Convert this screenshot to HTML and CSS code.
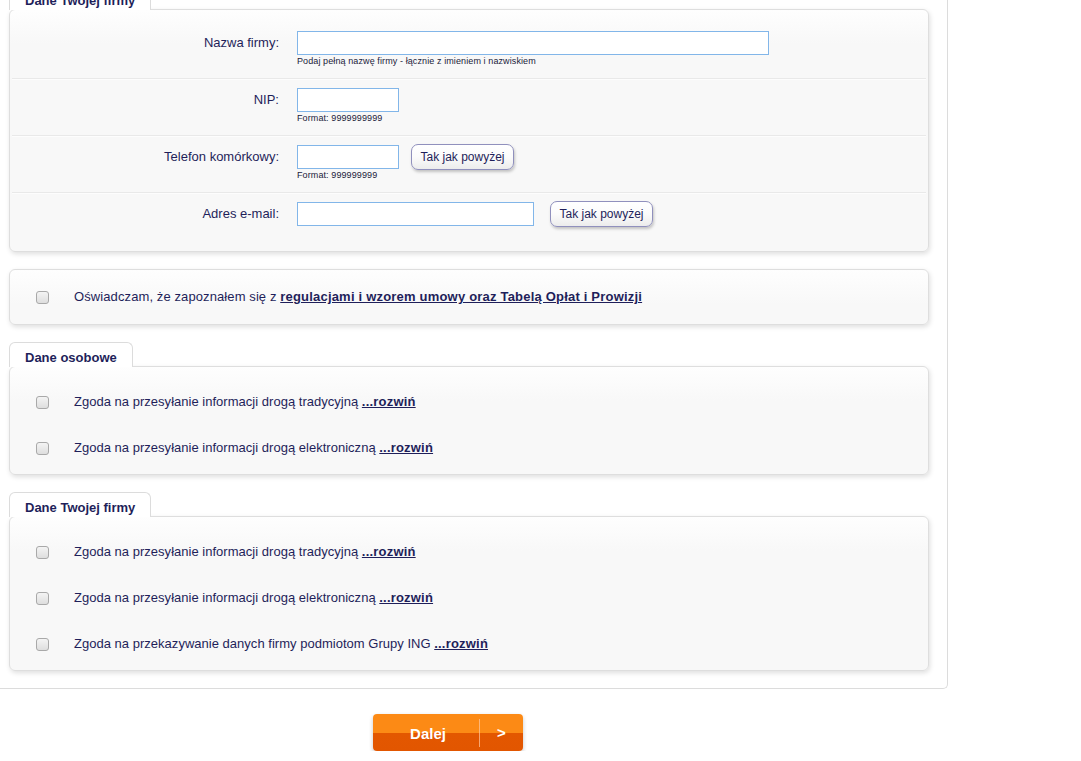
FILE: index.html
```html
<!DOCTYPE html>
<html lang="pl">
<head>
<meta charset="utf-8">
<title>Formularz</title>
<link rel="stylesheet" href="styles.css">
</head>
<body>
<div class="page">
  <div class="frame">
    <div class="tab">Dane Twojej firmy</div>
    <div class="panel panel-form">
      <div class="frow">
        <label class="flabel">Nazwa firmy:</label>
        <div class="fcontrol">
          <div class="fline"><input class="inp inp-name" type="text"></div>
          <div class="hint">Podaj pełną nazwę firmy - łącznie z imieniem i nazwiskiem</div>
        </div>
      </div>
      <div class="frow">
        <label class="flabel">NIP:</label>
        <div class="fcontrol">
          <div class="fline"><input class="inp inp-short" type="text"></div>
          <div class="hint">Format: 9999999999</div>
        </div>
      </div>
      <div class="frow">
        <label class="flabel">Telefon komórkowy:</label>
        <div class="fcontrol">
          <div class="fline"><input class="inp inp-short" type="text"><button class="same same-phone">Tak jak powyżej</button></div>
          <div class="hint">Format: 999999999</div>
        </div>
      </div>
      <div class="frow frow-last">
        <label class="flabel">Adres e-mail:</label>
        <div class="fcontrol">
          <div class="fline"><input class="inp inp-mail" type="text"><button class="same same-mail">Tak jak powyżej</button></div>
        </div>
      </div>
    </div>

    <div class="panel panel-single">
      <div class="crow"><input type="checkbox" class="cb"><span class="ctext ctext-wide">Oświadczam, że zapoznałem się z <a href="#" class="lnk">regulacjami i wzorem umowy oraz Tabelą Opłat i Prowizji</a></span></div>
    </div>

    <div class="tab tab-gap">Dane osobowe</div>
    <div class="panel panel-list">
      <div class="crow"><input type="checkbox" class="cb"><span class="ctext">Zgoda na przesyłanie informacji drogą tradycyjną <a href="#" class="lnk">...rozwiń</a></span></div>
      <div class="crow"><input type="checkbox" class="cb"><span class="ctext">Zgoda na przesyłanie informacji drogą elektroniczną <a href="#" class="lnk">...rozwiń</a></span></div>
    </div>

    <div class="tab tab-gap">Dane Twojej firmy</div>
    <div class="panel panel-list">
      <div class="crow"><input type="checkbox" class="cb"><span class="ctext">Zgoda na przesyłanie informacji drogą tradycyjną <a href="#" class="lnk">...rozwiń</a></span></div>
      <div class="crow"><input type="checkbox" class="cb"><span class="ctext">Zgoda na przesyłanie informacji drogą elektroniczną <a href="#" class="lnk">...rozwiń</a></span></div>
      <div class="crow"><input type="checkbox" class="cb"><span class="ctext">Zgoda na przekazywanie danych firmy podmiotom Grupy ING <a href="#" class="lnk">...rozwiń</a></span></div>
    </div>
  </div>

  <div class="footer">
    <button class="next"><span class="next-label">Dalej</span><span class="next-arrow">&gt;</span></button>
  </div>
</div>
</body>
</html>
```

FILE: styles.css
```css
html, body {
  margin: 0;
  padding: 0;
  background: #fff;
}
body {
  font-family: "Liberation Sans", Arial, sans-serif;
  font-size: 13px;
  color: #1f1f5a;
}
.page {
  margin-top: -15px;
}
.frame {
  width: 919px;
  padding: 0 19px 17px 9px;
  border-right: 1px solid #dcdcdc;
  border-bottom: 1px solid #dcdcdc;
  border-bottom-right-radius: 5px;
}
.tab {
  position: relative;
  z-index: 1;
  display: inline-block;
  box-sizing: border-box;
  height: 25px;
  padding: 6px 15px 1px 15px;
  line-height: 17px;
  font-weight: bold;
  font-size: 13px;
  color: #1f1f5a;
  background: #fff;
  border: 1px solid #dcdcdc;
  border-bottom: none;
  border-radius: 6px 6px 0 0;
  margin-bottom: -1px;
  vertical-align: top;
}
.tab-gap {
  margin-top: 17px;
}
.panel {
  width: 920px;
  box-sizing: border-box;
  border: 1px solid #dedede;
  border-radius: 6px;
  background: linear-gradient(#fefefe 0, #f8f8f8 34px, #f8f8f8 100%);
  box-shadow: 1px 2px 5px rgba(0, 0, 0, 0.13);
}
.panel-form {
  padding: 12px 0 14px 0;
}
.panel-single {
  margin-top: 17px;
  padding: 4px 0 4px 0;
}
.panel-list {
  padding: 12px 0 3px 0;
}
.frow {
  display: grid;
  grid-template-columns: 270px 1fr;
  column-gap: 17px;
  margin: 0 2px 0 2px;
  padding: 9px 0 11px 0;
  border-bottom: 1px solid #e9e9e9;
  box-shadow: 0 1px 0 #fdfdfd;
}
.frow .flabel {
  margin-left: -2px;
  padding-right: 3px;
}
.frow-last {
  border-bottom: none;
  box-shadow: none;
}
.flabel {
  text-align: right;
  line-height: 24px;
  font-size: 13px;
  color: #1f1f5a;
}
.fline {
  display: flex;
  align-items: center;
  height: 24px;
}
.inp {
  box-sizing: border-box;
  height: 24px;
  margin: 0;
  padding: 2px 4px;
  border: 1px solid #82b6e9;
  background: #fff;
  font-family: "Liberation Sans", Arial, sans-serif;
  font-size: 13px;
  outline: none;
}
.inp-name { width: 472px; margin-left: -2px; }
.inp-short { width: 102px; margin-left: -2px; }
.inp-mail { width: 237px; margin-left: -2px; }
.hint {
  margin-left: -2px;
  height: 12px;
  line-height: 13px;
  font-size: 9px;
  color: #1a1a3a;
  letter-spacing: 0.1px;
}
.same {
  box-sizing: border-box;
  width: 103px;
  height: 26px;
  padding: 0;
  font-family: "Liberation Sans", Arial, sans-serif;
  font-size: 12px;
  color: #1f1f5a;
  background: linear-gradient(#ffffff 0, #fbfbfb 50%, #ececec 100%);
  border: 1px solid #9090bd;
  border-radius: 7px;
  box-shadow: 1px 2px 3px rgba(0, 0, 0, 0.22);
  cursor: pointer;
}
.same-phone { margin-left: 12px; margin-top: -1px; }
.same-mail { margin-left: 16px; margin-top: -1px; }
.crow {
  display: flex;
  align-items: center;
  height: 46px;
}
.cb {
  -webkit-appearance: none;
  appearance: none;
  box-sizing: border-box;
  width: 13px;
  height: 13px;
  margin: 0 25px 0 26px;
  border: 1px solid #a9a9a9;
  border-radius: 3px;
  background: linear-gradient(#f4f4f4, #dedede);
  flex: none;
}
.ctext {
  font-size: 13px;
  color: #1f1f5a;
  line-height: 16px;
  letter-spacing: 0.02px;
}
.ctext-wide {
  letter-spacing: 0.1px;
}
.lnk {
  color: #1f1f5a;
  font-weight: bold;
  text-decoration: underline;
  letter-spacing: 0.2px;
}
.footer {
  display: flex;
  padding: 25px 0 0 373px;
}
.next {
  display: flex;
  align-items: stretch;
  width: 150px;
  height: 37px;
  padding: 0;
  border: none;
  border-radius: 4px;
  background: linear-gradient(#fc8a15 0, #fc8a15 50%, #e35700 50%, #e25600 100%);
  box-shadow: 0 2px 4px rgba(0, 0, 0, 0.22);
  font-family: "Liberation Sans", Arial, sans-serif;
  color: #fff;
  cursor: pointer;
}
.next-label {
  width: 107px;
  display: flex;
  align-items: center;
  justify-content: center;
  padding-left: 4px;
  box-sizing: border-box;
  font-size: 15px;
  font-weight: bold;
  border-right: 1px solid rgba(255, 200, 160, 0.7);
  margin: 5px 0 4px 0;
}
.next-arrow {
  flex: 1;
  display: flex;
  align-items: center;
  justify-content: center;
  font-size: 15px;
  font-weight: bold;
}
```
